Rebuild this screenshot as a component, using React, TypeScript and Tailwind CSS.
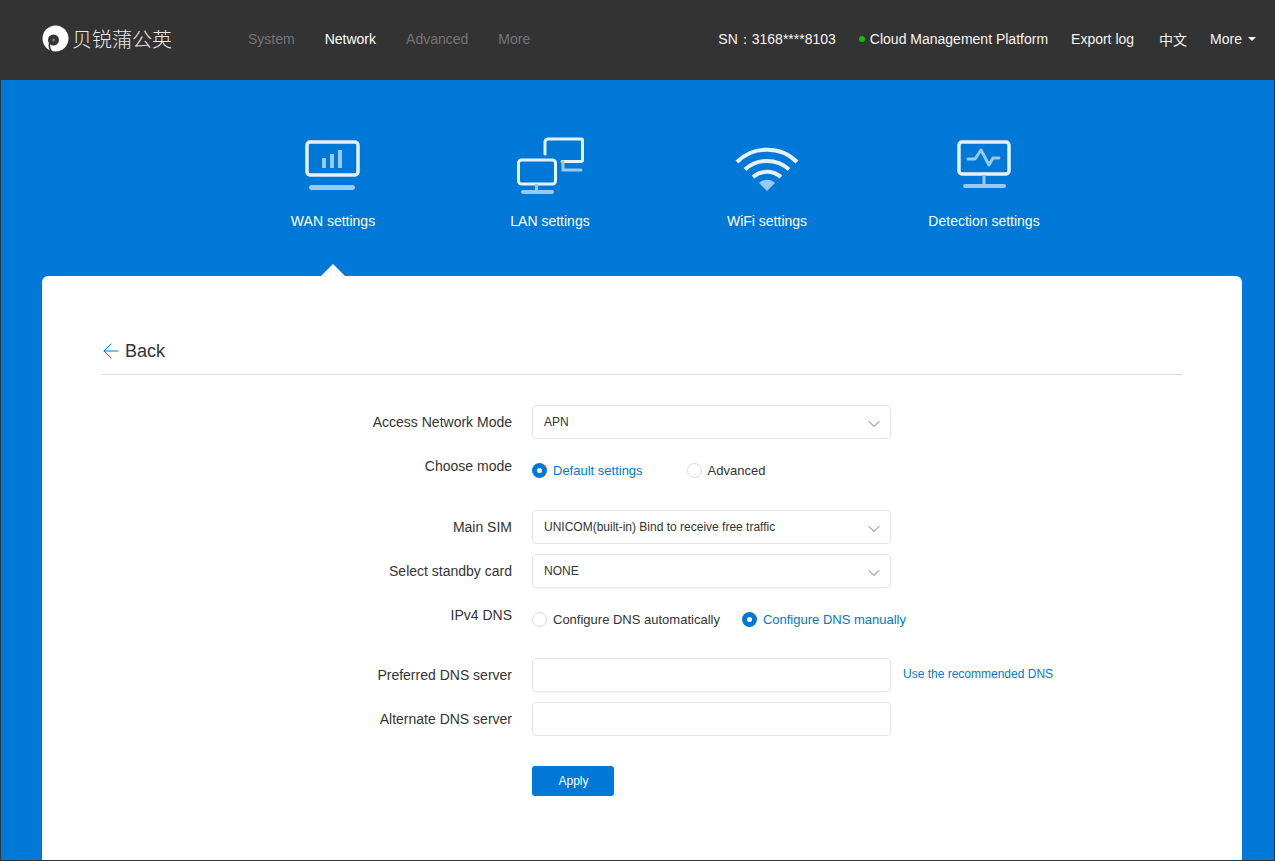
import React from 'react';
import { ArrowLeft, ChevronDown } from 'lucide-react';

const BLUE = '#0078d7';

const Logo = () => (
  <div className="flex items-center">
    <svg width="27" height="28" viewBox="0 0 27 28" className="shrink-0">
      <circle cx="13.5" cy="13.5" r="13" fill="#fff" />
      <circle cx="11.5" cy="15" r="5.500" fill="#333" />
      <circle cx="11.5" cy="15" r="1.500" fill="#777" />
      <path d="M7.500 18C7 21 7.500 24 9.500 26.500" stroke="#333" strokeWidth="1.500" fill="none" />
    </svg>
    <span className="ml-[3px] text-[20px] font-light text-[#e8e8e8] [font-family:Noto_Sans_CJK_SC,sans-serif]">贝锐蒲公英</span>
  </div>
);

const WanIcon = () => (
  <svg width="56" height="52" viewBox="0 0 56 52" fill="none" className="mt-[4px]">
    <rect x="2" y="2" width="51" height="33" rx="3" stroke="#e6f1fb" strokeWidth="3.500" />
    <rect x="17" y="18" width="4" height="10" fill="#99c9ef" />
    <rect x="25" y="14" width="4" height="14" fill="#99c9ef" />
    <rect x="33" y="10" width="4" height="18" fill="#99c9ef" />
    <rect x="4" y="45" width="46" height="5" rx="2.5" fill="#99c9ef" />
  </svg>
);

const LanIcon = () => (
  <svg width="68" height="58" viewBox="0 0 68 58" fill="none" className="mt-[1px]">
    <path d="M29 17V5a3 3 0 0 1 3-3h33a1.500 1.500 0 0 1 1.500 1.500V23a1.500 1.500 0 0 1-1.500 1.500H46" stroke="#e6f1fb" strokeWidth="3" strokeLinecap="round" />
    <path d="M47 25v8h18" stroke="#99c9ef" strokeWidth="3" strokeLinecap="round" />
    <rect x="2.500" y="23" width="37" height="24" rx="3" stroke="#e6f1fb" strokeWidth="3" />
    <path d="M20.500 47v9" stroke="#99c9ef" strokeWidth="3" />
    <rect x="5" y="53" width="33" height="4" rx="2" fill="#99c9ef" />
  </svg>
);

const WifiIcon = () => (
  <svg width="64" height="46" viewBox="0 0 64 46" fill="none" className="mt-[10px]">
    <path d="M2 16C18 -0.500 46 -0.500 62 16" stroke="#e6f1fb" strokeWidth="4" />
    <path d="M10 23.500C22 12 42 12 54 23.500" stroke="#e6f1fb" strokeWidth="4" />
    <path d="M18 31C26 24 38 24 46 31" stroke="#e6f1fb" strokeWidth="4" />
    <path d="M24 37C28 32.500 36 32.500 40 37L32 45Z" fill="#99c9ef" />
  </svg>
);

const DetectIcon = () => (
  <svg width="54" height="50" viewBox="0 0 54 50" fill="none" className="mt-[4px]">
    <rect x="2" y="2" width="50" height="32" rx="3" stroke="#e6f1fb" strokeWidth="3.500" />
    <path d="M11 19H18L24 10L32 25L36 18H42" stroke="#99c9ef" strokeWidth="3" strokeLinecap="round" strokeLinejoin="round" />
    <path d="M27 35V45" stroke="#99c9ef" strokeWidth="3" />
    <rect x="6" y="44" width="43" height="4" rx="2" fill="#99c9ef" />
  </svg>
);

const tabs = [
  { label: 'WAN settings', icon: <WanIcon /> },
  { label: 'LAN settings', icon: <LanIcon /> },
  { label: 'WiFi settings', icon: <WifiIcon /> },
  { label: 'Detection settings', icon: <DetectIcon /> },
];

const Field = ({ label, children }: { label: string; children: React.ReactNode }) => (
  <div className="flex items-start">
    <label className="w-[470px] text-right text-[14px] leading-[34px] text-[#333]">{label}</label>
    <div className="ml-[20px]">{children}</div>
  </div>
);

const Select = ({ value }: { value: string }) => (
  <div className="flex h-[34px] w-[359px] items-center justify-between rounded-[4px] border border-[#e5e5e5] bg-white pl-[11px] pr-[6px] text-[12px] text-[#333]">
    <span className="-mt-[1px]">{value}</span>
    <ChevronDown size={20} strokeWidth={1} className="mt-[3px] text-[#555]" />
  </div>
);

const Input = () => (
  <input className="block h-[34px] w-[359px] rounded-[4px] border border-[#e5e5e5] bg-white outline-none" />
);

const Radio = ({ label, checked }: { label: string; checked?: boolean }) => (
  <div className={`flex items-center gap-[6px] text-[13px] ${checked ? 'text-[#0078d7]' : 'text-[#333]'}`}>
    {checked ? (
      <span className="flex h-[15px] w-[15px] items-center justify-center rounded-full bg-[#0078d7]">
        <span className="h-[5px] w-[5px] rounded-full bg-white" />
      </span>
    ) : (
      <span className="h-[15px] w-[15px] rounded-full border border-[#d9d9e3] bg-white" />
    )}
    <span>{label}</span>
  </div>
);

export default function App() {
  return (
    <div className="flex h-[861px] flex-col overflow-hidden bg-[#333] [font-family:Liberation_Sans,Arial,sans-serif]">
      <header className="flex h-[80px] shrink-0 items-center pb-[2px] pl-[42px] pr-[19px] text-[14px]">
        <Logo />
        <nav className="ml-[76px] flex gap-[30px] text-[#757575]">
          <span>System</span>
          <span className="text-white">Network</span>
          <span>Advanced</span>
          <span>More</span>
        </nav>
        <div className="ml-auto flex items-center text-[#f5f5f5]">
          <span>SN：3168****8103</span>
          <span className="ml-[23px] h-[6px] w-[6px] rounded-full bg-[#0bc20b]" />
          <span className="ml-[5px]">Cloud Management Platform</span>
          <span className="ml-[23px]">Export log</span>
          <span className="ml-[25px] [font-family:Noto_Sans_CJK_SC,Liberation_Sans,sans-serif]">中文</span>
          <span className="ml-[23px]">More</span>
          <span className="ml-[6px] h-0 w-0 border-x-[4px] border-t-[4px] border-x-transparent border-t-[#f5f5f5]" />
        </div>
      </header>

      <main className="mx-[1px] mb-[1px] flex-1 overflow-hidden bg-[#0078d7]">
        <div className="flex h-[196px] pl-[223.5px] pt-[56px]">
          {tabs.map((t, i) => (
            <div key={t.label} className="relative flex h-[140px] w-[217px] flex-col items-center">
              <div className="flex h-[58px] items-start justify-center">{t.icon}</div>
              <span className="mt-[17px] text-[14px] text-white">{t.label}</span>
              {i === 0 && (
                <span className="absolute bottom-0 left-1/2 h-0 w-0 -translate-x-1/2 border-x-[12px] border-b-[12px] border-x-transparent border-b-white" />
              )}
            </div>
          ))}
        </div>

        <section className="ml-[41px] h-[600px] w-[1200px] rounded-[6px] bg-white px-[60px] pt-[60px]">
          <div className="flex h-[39px] items-start border-b border-[#ddd]">
            <button className="flex items-center text-[18px] leading-[30px] text-[#333]">
              <ArrowLeft size={24} strokeWidth={1} color={BLUE} className="-ml-[3px]" />
              <span className="ml-[2px]">Back</span>
            </button>
          </div>

          <form className="-ml-[60px] mt-[30px] flex flex-col gap-[10px]">
            <Field label="Access Network Mode"><Select value="APN" /></Field>
            <div className="h-[51px]">
              <Field label="Choose mode">
                <div className="flex gap-[44px] pt-[12px]">
                  <Radio label="Default settings" checked />
                  <Radio label="Advanced" />
                </div>
              </Field>
            </div>
            <Field label="Main SIM"><Select value="UNICOM(built-in) Bind to receive free traffic" /></Field>
            <Field label="Select standby card"><Select value="NONE" /></Field>
            <div className="h-[50px]">
              <Field label="IPv4 DNS">
                <div className="flex gap-[22px] pt-[12px]">
                  <Radio label="Configure DNS automatically" />
                  <Radio label="Configure DNS manually" checked />
                </div>
              </Field>
            </div>
            <Field label="Preferred DNS server">
              <div className="flex items-center gap-[12px]">
                <Input />
                <a className="-mt-[3px] text-[12px] text-[#0078d7]">Use the recommended DNS</a>
              </div>
            </Field>
            <Field label="Alternate DNS server"><Input /></Field>
            <div className="ml-[490px] mt-[20px]">
              <button type="button" className="h-[30px] w-[82px] rounded-[3px] bg-[#0078d7] pl-px text-[12px] text-white">Apply</button>
            </div>
          </form>
        </section>
      </main>
    </div>
  );
}
